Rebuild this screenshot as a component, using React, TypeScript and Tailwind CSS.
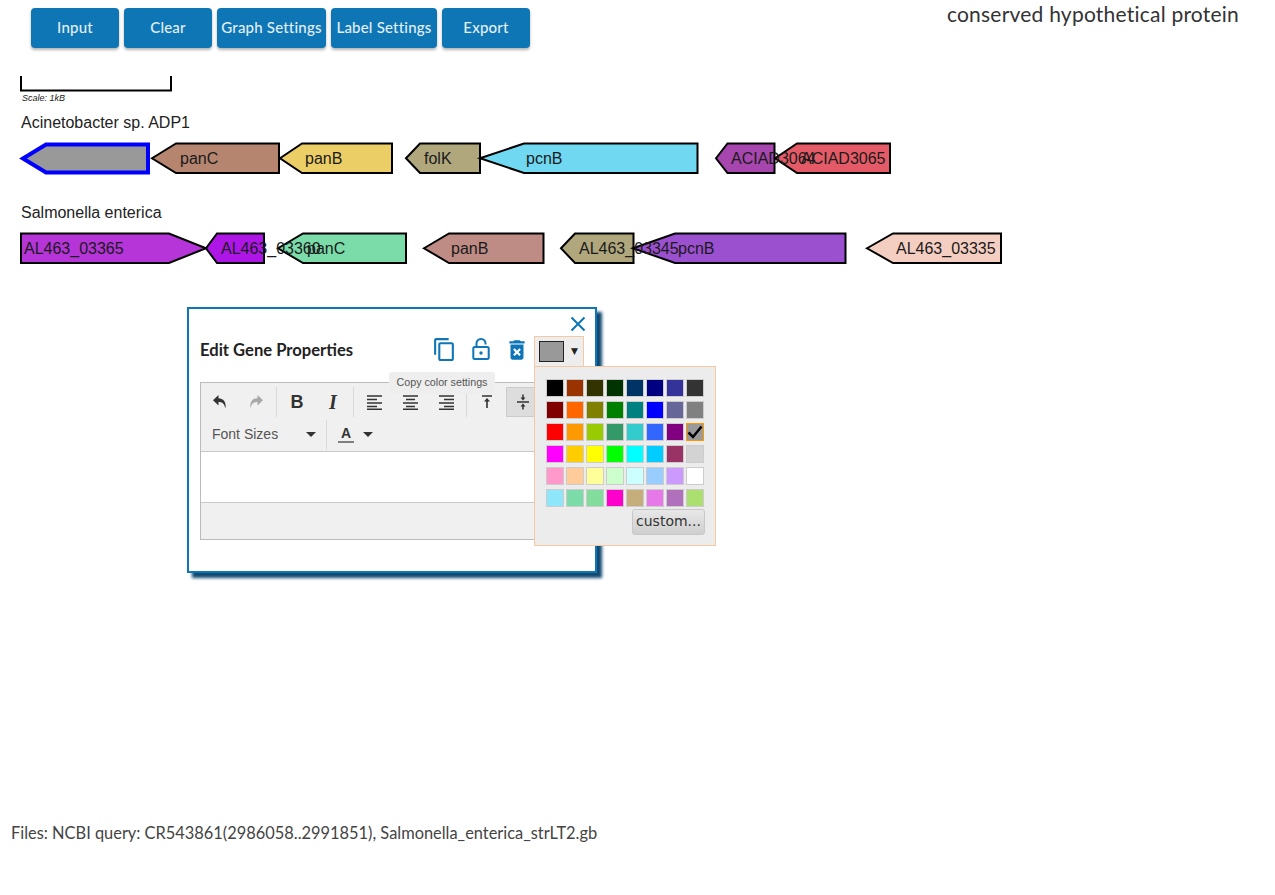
import React from "react";
import { MdOutlineContentCopy, MdDeleteForever } from "react-icons/md";

type Gene = { pts: string; fill: string; label?: string; tx?: number; stroke?: string; sw?: number };

const arrowL = (tip: number, sh: number, r: number, t: number, b: number) =>
  `${tip},${(t + b) / 2} ${sh},${t} ${r},${t} ${r},${b} ${sh},${b}`;
const arrowR = (l: number, sh: number, tip: number, t: number, b: number) =>
  `${l},${t} ${sh},${t} ${tip},${(t + b) / 2} ${sh},${b} ${l},${b}`;

const row1: Gene[] = [
  { pts: arrowL(23, 46, 148, 144.5, 172.5), fill: "#999999", stroke: "#0000ff", sw: 4 },
  { pts: arrowL(152, 176, 279, 143.5, 173), fill: "#b58570", label: "panC", tx: 180 },
  { pts: arrowL(280, 302, 392, 143.5, 173), fill: "#ebcf66", label: "panB", tx: 305 },
  { pts: arrowL(406, 420, 480, 143.5, 173), fill: "#b0a77c", label: "folK", tx: 424 },
  { pts: arrowL(480, 524, 697.5, 143.5, 173), fill: "#70d8f0", label: "pcnB", tx: 526 },
  { pts: arrowL(716, 727.5, 774.5, 143.5, 173), fill: "#a646ae", label: "ACIAD3064", tx: 731 },
  { pts: arrowL(775, 797, 890, 143.5, 173), fill: "#e45a66", label: "ACIAD3065", tx: 801 },
];
const row2: Gene[] = [
  { pts: arrowR(21, 169, 206, 233.5, 263), fill: "#b535d8", label: "AL463_03365", tx: 24 },
  { pts: arrowL(206, 217, 264, 233.5, 263), fill: "#ae16e8", label: "AL463_03360", tx: 221 },
  { pts: arrowL(278, 303, 406, 233.5, 263), fill: "#7bdcaa", label: "panC", tx: 307 },
  { pts: arrowL(424, 449, 543.5, 233.5, 263), fill: "#be8c84", label: "panB", tx: 451 },
  { pts: arrowL(561, 575, 633.5, 233.5, 263), fill: "#b0a77c", label: "AL463_03345", tx: 579 },
  { pts: arrowL(633, 675, 845.5, 233.5, 263), fill: "#9b50d0", label: "pcnB", tx: 678 },
  { pts: arrowL(867, 893, 1001, 233.5, 263), fill: "#f5cec2", label: "AL463_03335", tx: 896 },
];

const swatches = [
  ["#000000", "#993300", "#333300", "#003300", "#003366", "#000080", "#333399", "#333333"],
  ["#800000", "#ff6600", "#808000", "#008000", "#008080", "#0000ff", "#666699", "#808080"],
  ["#ff0000", "#ff9900", "#99cc00", "#339966", "#33cccc", "#3366ff", "#800080", "#999999"],
  ["#ff00ff", "#ffcc00", "#ffff00", "#00ff00", "#00ffff", "#00ccff", "#993366", "#d3d3d3"],
  ["#ff99cc", "#ffcc99", "#ffff99", "#ccffcc", "#ccffff", "#99ccff", "#cc99ff", "#ffffff"],
  ["#8de6fa", "#7bdcaa", "#82dc9c", "#ff00cc", "#c6ad7c", "#e678e8", "#b070bc", "#abe070"],
];

const buttons = [
  { t: "Input", w: "w-[88px]" },
  { t: "Clear", w: "w-[88px]" },
  { t: "Graph Settings", w: "w-[109px]" },
  { t: "Label Settings", w: "w-[106px]" },
  { t: "Export", w: "w-[88px]" },
];

function GeneMap() {
  const all = [...row1, ...row2];
  return (
    <svg width="1275" height="220" viewBox="0 60 1275 220" className="block">
      <path d="M21 76V90.5H171V76" fill="none" stroke="#000" strokeWidth="2" />
      <text x="22" y="101" fontSize="9" fontStyle="italic" fontFamily="'Liberation Sans', sans-serif" fill="#222">
        Scale: 1kB
      </text>
      <text x="21" y="128" fontSize="16" fontFamily="'Liberation Sans', sans-serif" fill="#222">
        Acinetobacter sp. ADP1
      </text>
      <text x="21" y="218" fontSize="16" fontFamily="'Liberation Sans', sans-serif" fill="#222">
        Salmonella enterica
      </text>
      {all.map((g, i) => (
        <polygon key={i} points={g.pts} fill={g.fill} stroke={g.stroke ?? "#000"} strokeWidth={g.sw ?? 2} />
      ))}
      {all.map((g, i) =>
        g.label ? (
          <text key={i} x={g.tx} y={i < 7 ? 164 : 254} fontSize="16" fontFamily="'Liberation Sans', sans-serif" fill="#1a1a1a">
            {g.label}
          </text>
        ) : null
      )}
    </svg>
  );
}

function Align({ kind }: { kind: "l" | "c" | "r" }) {
  const short = kind === "l" ? "M1 5.5H11M1 12.5H11" : kind === "c" ? "M4 5.5H13M4 12.5H13" : "M6 5.5H16M6 12.5H16";
  return (
    <svg width="17" height="16" viewBox="0 0 17 16">
      <path d={`M1 2H16M1 9H16M1 15.2H16 ${short}`} stroke="#333" strokeWidth="1.6" fill="none" />
    </svg>
  );
}

function Btn({ children, active, w = "w-[36px]" }: { children?: React.ReactNode; active?: boolean; w?: string }) {
  return (
    <div className={`${w} h-[30px] flex items-center justify-center ${active ? "bg-[#dddddd] border border-[#cccccc]" : ""}`}>
      {children}
    </div>
  );
}

const Sep = () => <div className="w-px h-[30px] bg-[#d9d9d9] ml-[2px] mr-[2px]" />;

function Toolbar() {
  return (
    <div className="absolute left-[11px] top-[73px] w-[384px] h-[158px] border border-[#bbbbbb] bg-[#f0f0f0] flex flex-col">
      <div className="flex items-center h-[36px] pl-[1px] pt-[2px]">
        <Btn>
          <svg width="16" height="16" viewBox="0 0 16 16">
            <path d="M6.5 1 1 6.2l5.5 5.2V8c3.6 0 5.6 1 7 6.5C14.5 7.500 11 4.200 6.500 4.200z" fill="#333" />
          </svg>
        </Btn>
        <Btn>
          <svg width="16" height="16" viewBox="0 0 16 16">
            <path d="M9.500 1 15 6.200l-5.500 5.200V8c-3.600 0-5.600 1-7 6.500C1.500 7.500 5 4.200 9.500 4.200z" fill="#a8a8a8" />
          </svg>
        </Btn>
        <Sep />
        <Btn>
          <span className="font-['Liberation_Sans',sans-serif] font-bold text-[18px] text-[#333] leading-none">B</span>
        </Btn>
        <Btn>
          <span className="font-['Liberation_Serif',serif] italic font-bold text-[20px] text-[#333] leading-none">I</span>
        </Btn>
        <Sep />
        <Btn><Align kind="l" /></Btn>
        <Btn><Align kind="c" /></Btn>
        <Btn><Align kind="r" /></Btn>
        <Sep />
        <Btn>
          <svg width="12" height="14" viewBox="0 0 12 14">
            <path d="M1 1H11M6 13V5" stroke="#333" strokeWidth="1.6" fill="none" />
            <path d="M3 6.500 6 3l3 3.500z" fill="#333" />
          </svg>
        </Btn>
        <div className="w-px" />
        <Btn active w="w-[34px]">
          <svg width="12" height="16" viewBox="0 0 12 16">
            <path d="M0 8H12" stroke="#333" strokeWidth="1.5" />
            <path d="M6 0.500V4.500M6 11.500V15.500" stroke="#333" strokeWidth="1.500" />
            <path d="M3.500 3.500 6 6.500l2.500-3zM3.500 12.500 6 9.500l2.500 3z" fill="#333" />
          </svg>
        </Btn>
      </div>
      <div className="flex items-center h-[31px] pb-[1px] border-b border-[#c8c8c8] box-content">
        <div className="w-[125px] h-[30px] pl-[11px] pr-[10px] flex items-center justify-between">
          <span className="font-['Liberation_Sans',sans-serif] text-[14px] text-[#555]">Font Sizes</span>
          <svg width="10" height="5" viewBox="0 0 10 5"><path d="M0 0H10L5 5z" fill="#333" /></svg>
        </div>
        <div className="w-px h-[30px] bg-[#d9d9d9]" />
        <div className="pl-[11px] flex items-center gap-[9px]">
          <div className="flex flex-col items-center w-[16px]">
            <span className="font-['Liberation_Sans',sans-serif] font-bold text-[14px] text-[#333] leading-[14px]">A</span>
            <div className="w-[16px] h-[2px] bg-[#808080] mt-[1px]" />
          </div>
          <svg width="10" height="5" viewBox="0 0 10 5"><path d="M0 0H10L5 5z" fill="#333" /></svg>
        </div>
      </div>
      <div className="h-[50px] bg-white border-b border-[#c8c8c8] box-content" />
      <div className="flex-1" />
    </div>
  );
}

function Modal() {
  return (
    <div className="absolute left-[187px] top-[307px] w-[410px] h-[266px] bg-white border-2 border-[#0e76b7] shadow-[5px_5px_3px_#124a70] z-10">
      <svg width="16" height="16" viewBox="0 0 16 16" className="absolute right-[9px] top-[7px]">
        <path d="M1.500 1.500 14.500 14.500M14.500 1.500 1.500 14.500" stroke="#0e76b7" strokeWidth="2" fill="none" />
      </svg>
      <div className="absolute left-[11px] top-[31px] font-['Lato',sans-serif] font-bold text-[16.600px] leading-[20px] text-[#222] whitespace-nowrap">
        Edit Gene Properties
      </div>
      <MdOutlineContentCopy className="absolute left-[243px] top-[28px] text-[#0e76b7]" size={25} />
      <svg width="18" height="22" viewBox="0 0 18 22" className="absolute left-[283px] top-[29px]">
        <rect x="1.300" y="9" width="15.400" height="12" rx="1.500" fill="none" stroke="#0e76b7" strokeWidth="2" />
        <path d="M4.500 9V5.500a4.500 4.500 0 0 1 9 0V6.500" fill="none" stroke="#0e76b7" strokeWidth="2" />
        <circle cx="9" cy="15" r="1.700" fill="#0e76b7" />
      </svg>
      <MdDeleteForever className="absolute left-[315px] top-[28px] text-[#0e76b7]" size={26} />
      <Toolbar />
      <div className="absolute left-[345px] top-[27px] w-[50px] h-[31px] bg-[#ededed] border border-[#f5c9a0] flex items-center pl-[4px] box-border">
        <div className="w-[25px] h-[21px] bg-[#999999] border border-[#222]" />
        <span className="ml-[7px] font-['DejaVu_Sans',sans-serif] text-[9px] text-[#222]">▼</span>
      </div>
    </div>
  );
}

function Tooltip() {
  return (
    <div className="absolute left-[389px] top-[372px] w-[106px] h-[22px] pb-[1px] z-20 rounded-[3px] bg-[#eeeeee] flex items-center justify-center font-['Liberation_Sans',sans-serif] text-[10.700px] text-[#555] whitespace-nowrap">
      Copy color settings
    </div>
  );
}

function Picker() {
  return (
    <div className="absolute left-[534px] top-[366px] w-[182px] h-[180px] z-20 bg-[#ececec] border border-[#f5c9a0] pt-[12px] pl-[11px] box-border">
      <div className="flex flex-col gap-[4px]">
        {swatches.map((row, r) => (
          <div key={r} className="flex gap-[2px]">
            {row.map((c, i) => {
              const sel = r === 2 && i === 7;
              return (
                <div
                  key={i}
                  className={`w-[18px] h-[18px] border flex items-center justify-center ${sel ? "border-[#ff9900]" : "border-[#cccccc]"}`}
                  style={{ backgroundColor: c }}
                >
                  {sel && (
                    <svg width="16" height="14" viewBox="0 0 16 14">
                      <path d="M1.500 7.500 6 12 14.500 1.500" stroke="#000" strokeWidth="2.500" fill="none" />
                    </svg>
                  )}
                </div>
              );
            })}
          </div>
        ))}
      </div>
      <div className="mt-[2px] ml-[86px] w-[73px] h-[26px] pb-[1px] rounded-[3px] bg-gradient-to-b from-[#e8e8e8] to-[#cfcfcf] border border-[#c8c8c8] flex items-center justify-center font-['DejaVu_Sans',sans-serif] text-[14px] text-[#333]">
        custom...
      </div>
    </div>
  );
}

export default function App() {
  return (
    <div className="relative w-[1275px] h-[895px] bg-white overflow-hidden font-['Lato',sans-serif]">
      <header className="flex h-[60px] pl-[31px] pr-[36px] pt-[8px]">
        <div className="flex gap-[5px] h-[40px]">
          {buttons.map((b) => (
            <div
              key={b.t}
              className={`${b.w} h-[40px] pb-[1px] rounded-[4px] bg-[#0f76b6] shadow-[0_2px_3px_rgba(0,0,0,0.3)] flex items-center justify-center text-[15px] font-medium tracking-[0.2px] text-[#e2eff7] whitespace-nowrap`}
            >
              {b.t}
            </div>
          ))}
        </div>
        <div className="ml-auto -mt-[8px] h-[28px] leading-[28px] text-[21px] tracking-[0.220px] text-[#333] whitespace-nowrap">
          conserved hypothetical protein
        </div>
      </header>
      <GeneMap />
      <div className="mt-[542px] ml-[11px] text-[16.400px] leading-[22px] text-[#444] whitespace-nowrap">
        Files: NCBI query: CR543861(2986058..2991851), Salmonella_enterica_strLT2.gb
      </div>
      <Modal />
      <Tooltip />
      <Picker />
    </div>
  );
}
